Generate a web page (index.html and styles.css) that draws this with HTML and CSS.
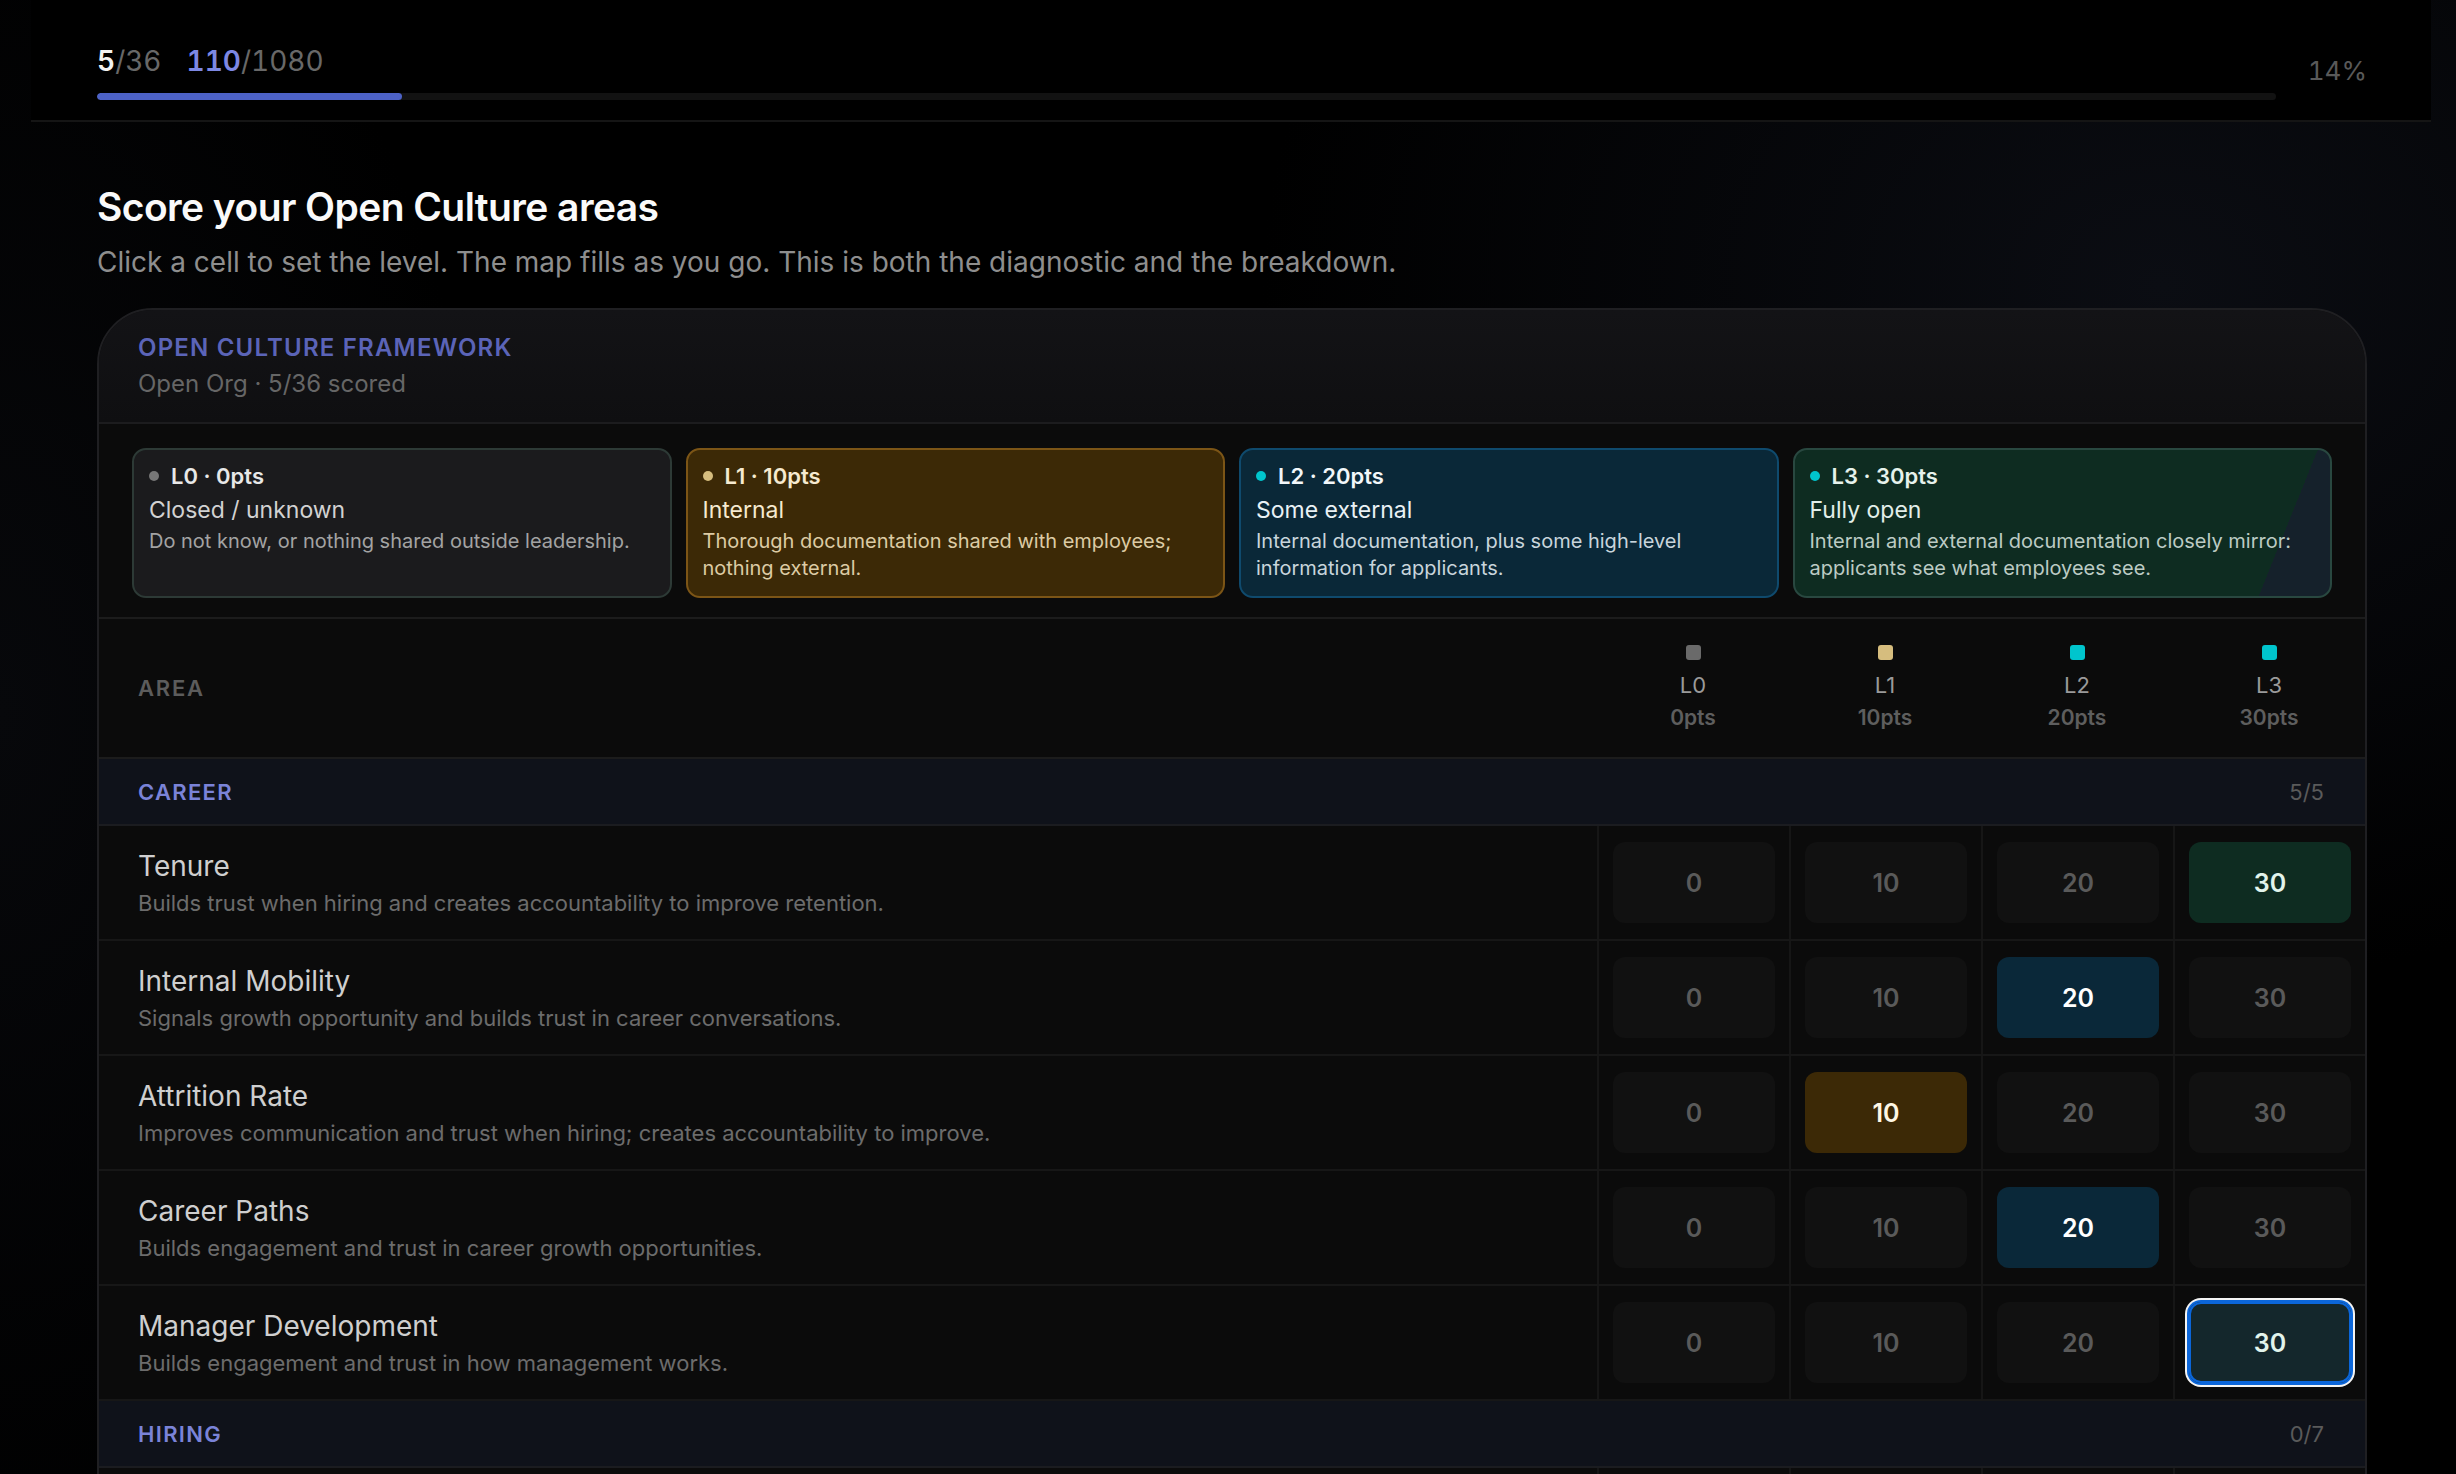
FILE: index.html
```html
<html lang="en">

<head>
    <meta charset="UTF-8">
    <meta name="viewport" content="width=device-width, initial-scale=1.0">
    <title>Open Culture Score</title>
    <link rel="stylesheet" href="styles.css">
</head>

<body>
    <header class="topbar">
        <div class="progress">
            <div class="counts">
                <span><b>5</b>/36</span>
                <span class="points"><b>110</b>/1080</span>
            </div>
            <div class="track"><div class="fill" style="width: 14%"></div></div>
        </div>
        <div class="pct">14%</div>
    </header>

    <main class="page">
        <h1>Score your Open Culture areas</h1>
        <p class="lead">Click a cell to set the level. The map fills as you go. This is both the diagnostic and the breakdown.</p>

        <section class="framework">
            <div class="fw-head">
                <div class="fw-title">OPEN CULTURE FRAMEWORK</div>
                <div class="fw-sub">Open Org · 5/36 scored</div>
            </div>

            <div class="legend">
                <div class="level l0">
                    <div class="level-title"><span class="dot"></span>L0 · 0pts</div>
                    <div class="level-name">Closed / unknown</div>
                    <div class="level-desc">Do not know, or nothing shared outside leadership.</div>
                </div>
                <div class="level l1">
                    <div class="level-title"><span class="dot"></span>L1 · 10pts</div>
                    <div class="level-name">Internal</div>
                    <div class="level-desc">Thorough documentation shared with employees; nothing external.</div>
                </div>
                <div class="level l2">
                    <div class="level-title"><span class="dot"></span>L2 · 20pts</div>
                    <div class="level-name">Some external</div>
                    <div class="level-desc">Internal documentation, plus some high-level information for applicants.</div>
                </div>
                <div class="level l3">
                    <div class="level-title"><span class="dot"></span>L3 · 30pts</div>
                    <div class="level-name">Fully open</div>
                    <div class="level-desc">Internal and external documentation closely mirror: applicants see what employees see.</div>
                </div>
            </div>

            <div class="grid table-head">
                <div class="area-label">AREA</div>
                <div class="col-head"><span class="sq l0"></span><span class="col-name">L0</span><span class="col-pts">0pts</span></div>
                <div class="col-head"><span class="sq l1"></span><span class="col-name">L1</span><span class="col-pts">10pts</span></div>
                <div class="col-head"><span class="sq l2"></span><span class="col-name">L2</span><span class="col-pts">20pts</span></div>
                <div class="col-head"><span class="sq l3"></span><span class="col-name">L3</span><span class="col-pts">30pts</span></div>
            </div>

            <div class="category">
                <span class="cat-name">CAREER</span>
                <span class="cat-count">5/5</span>
            </div>

            <div class="grid row">
                <div class="area">
                    <div class="area-name">Tenure</div>
                    <div class="area-desc">Builds trust when hiring and creates accountability to improve retention.</div>
                </div>
                <div class="cell"><button class="score">0</button></div>
                <div class="cell"><button class="score">10</button></div>
                <div class="cell"><button class="score">20</button></div>
                <div class="cell"><button class="score on-l3">30</button></div>
            </div>

            <div class="grid row">
                <div class="area">
                    <div class="area-name">Internal Mobility</div>
                    <div class="area-desc">Signals growth opportunity and builds trust in career conversations.</div>
                </div>
                <div class="cell"><button class="score">0</button></div>
                <div class="cell"><button class="score">10</button></div>
                <div class="cell"><button class="score on-l2">20</button></div>
                <div class="cell"><button class="score">30</button></div>
            </div>

            <div class="grid row">
                <div class="area">
                    <div class="area-name">Attrition Rate</div>
                    <div class="area-desc">Improves communication and trust when hiring; creates accountability to improve.</div>
                </div>
                <div class="cell"><button class="score">0</button></div>
                <div class="cell"><button class="score on-l1">10</button></div>
                <div class="cell"><button class="score">20</button></div>
                <div class="cell"><button class="score">30</button></div>
            </div>

            <div class="grid row">
                <div class="area">
                    <div class="area-name">Career Paths</div>
                    <div class="area-desc">Builds engagement and trust in career growth opportunities.</div>
                </div>
                <div class="cell"><button class="score">0</button></div>
                <div class="cell"><button class="score">10</button></div>
                <div class="cell"><button class="score on-l2">20</button></div>
                <div class="cell"><button class="score">30</button></div>
            </div>

            <div class="grid row">
                <div class="area">
                    <div class="area-name">Manager Development</div>
                    <div class="area-desc">Builds engagement and trust in how management works.</div>
                </div>
                <div class="cell"><button class="score">0</button></div>
                <div class="cell"><button class="score">10</button></div>
                <div class="cell"><button class="score">20</button></div>
                <div class="cell"><button class="score on-l3 focused">30</button></div>
            </div>

            <div class="category">
                <span class="cat-name">HIRING</span>
                <span class="cat-count">0/7</span>
            </div>

            <div class="grid row">
                <div class="area"></div>
                <div class="cell"></div>
                <div class="cell"></div>
                <div class="cell"></div>
                <div class="cell"></div>
            </div>
        </section>
    </main>
</body>

</html>
```

FILE: styles.css
```css
* {
    box-sizing: border-box;
}

body {
    margin: 0;
    min-height: 100vh;
    font-family: "Inter", "Noto Sans", sans-serif;
    color: #ddd;
    background-color: #000;
    background-image:
        radial-gradient(ellipse 900px 700px at 88% 18%, #0b0d13 0%, rgba(0, 0, 0, 0) 100%),
        radial-gradient(ellipse 500px 900px at 0% 45%, #07080b 0%, rgba(0, 0, 0, 0) 100%);
}

/* barra superior de progreso */
.topbar {
    display: flex;
    align-items: center;
    margin: 0 25px 0 31px;
    padding: 41px 64px 20px 66px;
    background: #000;
    border-bottom: 2px solid #151515;
}

.progress {
    flex: 1;
}

.counts {
    display: flex;
    gap: 25px;
    font-size: 28px;
    line-height: 40px;
    color: #686868;
    font-variant-numeric: tabular-nums;
}

.counts b {
    color: #f2f2f2;
    font-weight: 600;
}

.counts .points b {
    color: #7d88e4;
}

.track {
    margin-top: 12px;
    height: 7px;
    border-radius: 4px;
    background: #121212;
    overflow: hidden;
}

.fill {
    height: 100%;
    border-radius: 4px;
    background: #4d62c6;
}

.pct {
    margin-left: 32px;
    font-size: 26px;
    color: #595959;
    font-variant-numeric: tabular-nums;
}

.page {
    padding: 60px 89px 0 97px;
}

h1 {
    margin: 0;
    font-size: 39px;
    line-height: 50px;
    font-weight: 600;
    letter-spacing: -0.015em;
    color: #fafafa;
}

.lead {
    margin: 12px 0 28px;
    font-size: 28px;
    line-height: 36px;
    color: #8e8e8e;
}

/* panel principal */
.framework {
    border: 2px solid #1f1f22;
    border-radius: 56px 56px 0 0;
    background: #0b0b0b;
    overflow: hidden;
}

.fw-head {
    padding: 22px 40px 22px 39px;
    background: linear-gradient(#131316, #0f0f11);
    border-bottom: 2px solid #1c1c1e;
}

.fw-title {
    font-size: 24px;
    line-height: 32px;
    font-weight: 600;
    letter-spacing: 0.05em;
    color: #5b64b8;
}

.fw-sub {
    margin-top: 4px;
    font-size: 24px;
    line-height: 32px;
    color: #666;
}

.legend {
    display: grid;
    grid-template-columns: repeat(4, 1fr);
    gap: 14px;
    padding: 24px 33px 19px;
    border-bottom: 2px solid #1c1c1c;
}

.level {
    padding: 11px 16px 14px 15px;
    border: 2px solid #2d3a36;
    border-radius: 14px;
    background: #1b1b1d;
}

.level-title {
    display: flex;
    align-items: center;
    gap: 12px;
    font-size: 22px;
    line-height: 30px;
    font-weight: 600;
    color: #e8e8e8;
}

.dot {
    width: 10px;
    height: 10px;
    border-radius: 50%;
    background: #777;
}

.level-name {
    margin-top: 3px;
    font-size: 23px;
    line-height: 32px;
    font-weight: 400;
    color: #d2d2d2;
}

.level-desc {
    margin-top: 2px;
    font-size: 20px;
    line-height: 27px;
    color: #a3a3a3;
}

.level.l1 {
    border-color: #7c5516;
    background: #3c2906;
}

.level.l1 .dot { background: #d6bd7e; }
.level.l1 .level-title { color: #f6ead0; }
.level.l1 .level-name { color: #f6ead0; }
.level.l1 .level-desc { color: #dccba4; }

.level.l2 {
    border-color: #0f4a6d;
    background: #0a2838;
}

.level.l2 .dot { background: #00c5cd; }
.level.l2 .level-title { color: #f2f7fa; }
.level.l2 .level-name { color: #e9f1f5; }
.level.l2 .level-desc { color: #c8d5dc; }

.level.l3 {
    border-color: #294840;
    background: linear-gradient(112deg, #0e2c21 88%, #15212b 88%);
}

.level.l3 .dot { background: #00c5cd; }
.level.l3 .level-title { color: #e6f2ec; }
.level.l3 .level-name { color: #e2efe9; }
.level.l3 .level-desc { color: #bccbc4; }

/* tabla */
.grid {
    display: grid;
    grid-template-columns: 1fr repeat(4, 192px);
}

.table-head {
    border-bottom: 2px solid #1c1c1c;
}

.area-label {
    align-self: center;
    padding-left: 39px;
    font-size: 22px;
    font-weight: 600;
    letter-spacing: 0.08em;
    color: #5c5c5c;
}

.col-head {
    display: flex;
    flex-direction: column;
    align-items: center;
    padding: 26px 0 24px;
}

.sq {
    width: 15px;
    height: 15px;
    border-radius: 3px;
    margin-bottom: 10px;
    background: #6a6a6a;
}

.sq.l1 { background: #d6bd7e; }
.sq.l2 { background: #00c5cd; }
.sq.l3 { background: #00c5cd; }

.col-name {
    font-size: 22px;
    line-height: 30px;
    color: #9a9a9a;
}

.col-pts {
    margin-top: 3px;
    font-size: 21px;
    line-height: 30px;
    font-weight: 600;
    color: #5e5e5e;
}

.category {
    display: flex;
    justify-content: space-between;
    align-items: center;
    height: 67px;
    padding: 0 41px 0 39px;
    background: #0f121a;
    border-bottom: 2px solid #1b1c20;
}

.cat-name {
    font-size: 22px;
    font-weight: 600;
    letter-spacing: 0.06em;
    color: #7a83d8;
}

.cat-count {
    font-size: 22px;
    color: #5a5a5a;
}

.row {
    border-bottom: 2px solid #171717;
}

.area {
    display: flex;
    flex-direction: column;
    justify-content: center;
    padding: 0 39px;
}

.area-name {
    font-size: 28px;
    line-height: 36px;
    color: #cfcfcf;
}

.area-desc {
    margin-top: 4px;
    font-size: 22px;
    line-height: 30px;
    color: #6c6c6c;
}

.cell {
    min-height: 113px;
    padding: 16px 14px;
    border-left: 2px solid #161616;
}

.score {
    display: block;
    width: 100%;
    height: 81px;
    border: 0;
    border-radius: 12px;
    background: #111;
    font-family: inherit;
    font-size: 25px;
    font-weight: 600;
    color: #5a5a5a;
    cursor: pointer;
}

.score.on-l1 {
    background: #3c2906;
    color: #fff7e4;
}

.score.on-l2 {
    background: #0a2839;
    color: #fff;
}

.score.on-l3 {
    background: #0e2c21;
    color: #e2f4ec;
}

.score.focused {
    background: #14272c;
    box-shadow: inset 0 0 0 2px #0b66da, 0 0 0 2px #0b66da, 0 0 0 4px #f4f4f4;
}
```
